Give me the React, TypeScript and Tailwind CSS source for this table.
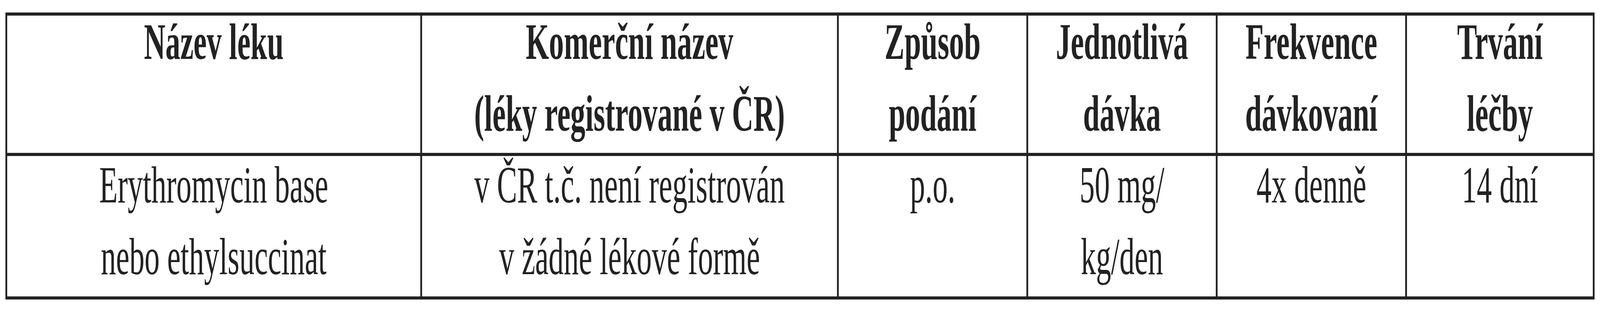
import { useLayoutEffect, useState } from 'react';

const headers = [
  ['Název léku'],
  ['Komerční název', '(léky registrované v ČR)'],
  ['Způsob', 'podání'],
  ['Jednotlivá', 'dávka'],
  ['Frekvence', 'dávkovaní'],
  ['Trvání', 'léčby'],
];

const row = [
  ['Erythromycin base', 'nebo ethylsuccinat'],
  ['v ČR t.č. není registrován', 'v žádné lékové formě'],
  ['p.o.'],
  ['50 mg/', 'kg/den'],
  ['4x denně'],
  ['14 dní'],
];

function Cell({ lines, head }: { lines: string[]; head?: boolean }) {
  return (
    <div
      className={`bg-white flex flex-col items-center leading-none whitespace-nowrap ${
        head ? 'font-bold text-[132px] gap-[52px] pt-[1px]' : 'font-normal text-[134px] gap-[50px] pt-[7px]'
      }`}
    >
      {lines.map((line) => (
        <span key={line}>{line}</span>
      ))}
    </div>
  );
}

export default function App() {
  // the table is drawn for a 7096px wide frame; squeeze it if the window is narrower
  const [scale, setScale] = useState(1);

  useLayoutEffect(() => {
    const fit = () => setScale(Math.min(1, window.innerWidth / 7096));
    fit();
    window.addEventListener('resize', fit);
    return () => window.removeEventListener('resize', fit);
  }, []);

  return (
    <div className="w-full h-[800px] overflow-hidden bg-white">
      <div
        className="w-[7096px] h-[800px] origin-top-left pt-[32px] pl-[24px] font-['Liberation_Serif',serif] text-[#222]"
        style={{ transform: `scaleX(${scale})` }}
      >
        <div className="grid w-fit grid-cols-[1832px_1840px_832px_832px_832px_824px] grid-rows-[352px_360px] gap-[8px] p-[8px] bg-[#222]">
          {headers.map((lines, i) => (
            <Cell key={`h${i}`} lines={lines} head />
          ))}
          {row.map((lines, i) => (
            <Cell key={`r${i}`} lines={lines} />
          ))}
        </div>
      </div>
    </div>
  );
}
